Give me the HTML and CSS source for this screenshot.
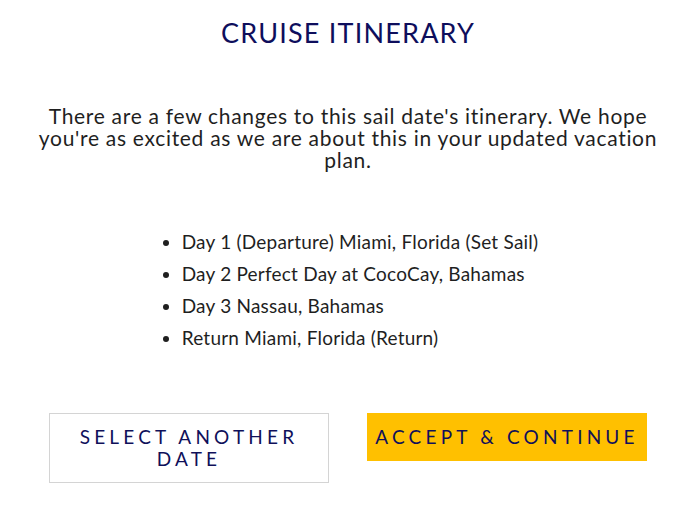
FILE: index.html
```html
<!DOCTYPE html>
<html>
<head>
<meta charset="utf-8">
<link rel="stylesheet" href="styles.css">
</head>
<body>
<div class="page">
  <h1 class="title">CRUISE ITINERARY</h1>
  <p class="intro">There are a few changes to this sail date's itinerary. We hope you're as excited as we are about this in your updated vacation plan.</p>
  <ul class="days">
    <li>Day 1 (Departure) Miami, Florida (Set Sail)</li>
    <li>Day 2 Perfect Day at CocoCay, Bahamas</li>
    <li>Day 3 Nassau, Bahamas</li>
    <li>Return Miami, Florida (Return)</li>
  </ul>
  <div class="actions">
    <button class="btn btn-outline">SELECT ANOTHER DATE</button>
    <button class="btn btn-primary">ACCEPT &amp; CONTINUE</button>
  </div>
</div>
</body>
</html>
```

FILE: styles.css
```css
html, body {
  margin: 0;
  padding: 0;
  background: #ffffff;
}
.page {
  font-family: Lato, "Liberation Sans", sans-serif;
  color: #1f1f1f;
  padding: 16px 40px 0 49px;
  display: flex;
  flex-direction: column;
  align-items: center;
}
.title {
  margin: 0;
  font-size: 27px;
  line-height: 34px;
  font-weight: 400;
  color: #0e0e5c;
  letter-spacing: 1.2px;
}
.intro {
  margin: 55px 0 0 0;
  width: 630px;
  flex-shrink: 0;
  font-size: 21px;
  line-height: 22px;
  letter-spacing: 0.7px;
  text-align: center;
}
.days {
  margin: 55px 0 0 0;
  padding-left: 24px;
  font-size: 19px;
  line-height: 32px;
  letter-spacing: 0.22px;
}
.actions {
  margin-top: 59px;
  display: flex;
  gap: 38px;
  align-items: flex-start;
  align-self: stretch;
}
.btn {
  width: 280px;
  font-family: Lato, "Liberation Sans", sans-serif;
  font-size: 19px;
  line-height: 22px;
  letter-spacing: 4.2px;
  color: #10105a;
  border: 1px solid #d4d4d4;
  background: #ffffff;
  padding: 12px 6px 12px 6px;
  cursor: pointer;
}
.btn-primary {
  background: #ffc000;
  border-color: #ffc000;
}
```
